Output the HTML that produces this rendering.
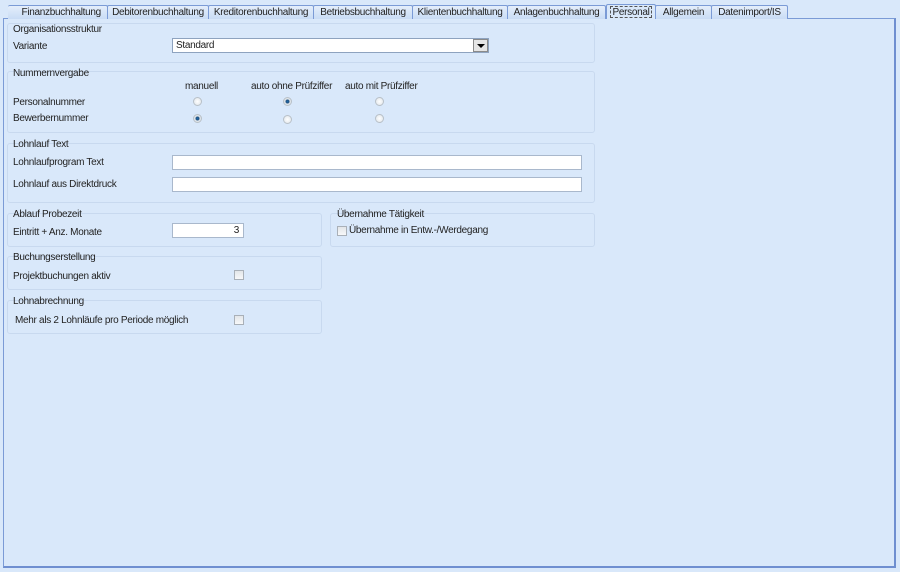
<!DOCTYPE html><html><head><style>
body{margin:0;width:900px;height:572px;background:#d9e8fa;font-family:"Liberation Sans",sans-serif;font-size:10px;letter-spacing:-0.3px;color:#222;position:relative;overflow:hidden}
div,span{position:absolute;box-sizing:border-box}
.panel{left:3px;top:18px;width:893px;height:550px;border:1px solid #7b9bd6;border-right:2px solid #6f8fd0;border-bottom:2px solid #6f8fd0;background:#d9e8fa}
.tab{top:5px;height:14px;border:1px solid #7b9bd6;border-bottom:none;background:linear-gradient(#e4eefb,#c9dcf5);text-align:center;line-height:14px;font-size:10px;border-radius:2px 2px 0 0;white-space:nowrap}
.g{border:1px solid #c8d9ef;border-radius:3px}
.gt{font-size:10px}
.l{font-size:10px}
.in{background:#fff;border:1px solid #a9b8cc}
.r{width:9px;height:9px;border-radius:50%;border:1px solid #b8c0c8;background:radial-gradient(#fff,#dde3e8)}
.r.on{background:radial-gradient(#1f6fb0 0,#1e4f80 30%,#dfe5ea 50%)}
.c{width:10px;height:10px;border:1px solid #a9b0b8;background:linear-gradient(#e3e6e9,#f7f8f9)}
</style></head><body>
<div class="panel"></div>
<div class="tab" style="left:8px;width:100px;border-left:none">&nbsp;&nbsp;&nbsp;Finanzbuchhaltung</div>
<div class="tab" style="left:107px;width:102px">Debitorenbuchhaltung</div>
<div class="tab" style="left:208px;width:106px">Kreditorenbuchhaltung</div>
<div class="tab" style="left:313px;width:100px">Betriebsbuchhaltung</div>
<div class="tab" style="left:412px;width:96px">Klientenbuchhaltung</div>
<div class="tab" style="left:507px;width:99px">Anlagenbuchhaltung</div>
<div class="tab" style="left:606px;width:50px;top:4px;height:15px;background:#d9e8fa;line-height:15px"><span style="left:3px;top:1px;right:3px;bottom:1px;border:1px dashed #555"></span>Personal</div>
<div class="tab" style="left:655px;width:57px">Allgemein</div>
<div class="tab" style="left:711px;width:77px">Datenimport/IS</div>

<div class="g" style="left:7px;top:23px;width:588px;height:40px"></div>
<span class="gt" style="left:13px;top:24px">Organisationsstruktur</span>
<span class="l" style="left:13px;top:41px">Variante</span>
<div class="in" style="left:172px;top:38px;width:317px;height:15px;padding:1px 3px;border-color:#8ea3bf">Standard</div>
<div style="left:473px;top:39px;width:15px;height:13px;background:#e5e5e5;border:1px solid #8a8a8a"><span style="left:3px;top:4px;width:0;height:0;border-left:4px solid transparent;border-right:4px solid transparent;border-top:4px solid #000"></span></div>

<div class="g" style="left:7px;top:71px;width:588px;height:62px"></div>
<span class="gt" style="left:13px;top:68px">Nummernvergabe</span>
<span class="l" style="left:185px;top:81px">manuell</span>
<span class="l" style="left:251px;top:81px">auto ohne Prüfziffer</span>
<span class="l" style="left:345px;top:81px">auto mit Prüfziffer</span>
<span class="l" style="left:13px;top:97px">Personalnummer</span>
<span class="l" style="left:13px;top:113px">Bewerbernummer</span>
<div class="r" style="left:193px;top:97px"></div><div class="r on" style="left:283px;top:97px"></div><div class="r" style="left:375px;top:97px"></div>
<div class="r on" style="left:193px;top:114px"></div><div class="r" style="left:283px;top:115px"></div><div class="r" style="left:375px;top:114px"></div>

<div class="g" style="left:7px;top:143px;width:588px;height:60px"></div>
<span class="gt" style="left:13px;top:139px">Lohnlauf Text</span>
<span class="l" style="left:13px;top:157px">Lohnlaufprogram Text</span>
<span class="l" style="left:13px;top:179px">Lohnlauf aus Direktdruck</span>
<div class="in" style="left:172px;top:155px;width:410px;height:15px"></div>
<div class="in" style="left:172px;top:177px;width:410px;height:15px"></div>

<div class="g" style="left:7px;top:213px;width:315px;height:34px"></div>
<span class="gt" style="left:13px;top:209px">Ablauf Probezeit</span>
<span class="l" style="left:13px;top:227px">Eintritt + Anz. Monate</span>
<div class="in" style="left:172px;top:223px;width:72px;height:15px;text-align:right;padding:1px 4px">3</div>
<div class="g" style="left:330px;top:213px;width:265px;height:34px"></div>
<span class="gt" style="left:337px;top:209px">Übernahme Tätigkeit</span>
<div class="c" style="left:337px;top:226px"></div>
<span class="l" style="left:349px;top:225px">Übernahme in Entw.-/Werdegang</span>

<div class="g" style="left:7px;top:256px;width:315px;height:34px"></div>
<span class="gt" style="left:13px;top:252px">Buchungserstellung</span>
<span class="l" style="left:13px;top:271px">Projektbuchungen aktiv</span>
<div class="c" style="left:234px;top:270px"></div>

<div class="g" style="left:7px;top:300px;width:315px;height:34px"></div>
<span class="gt" style="left:13px;top:296px">Lohnabrechnung</span>
<span class="l" style="left:15px;top:315px">Mehr als 2 Lohnläufe pro Periode möglich</span>
<div class="c" style="left:234px;top:315px"></div>
</body></html>
